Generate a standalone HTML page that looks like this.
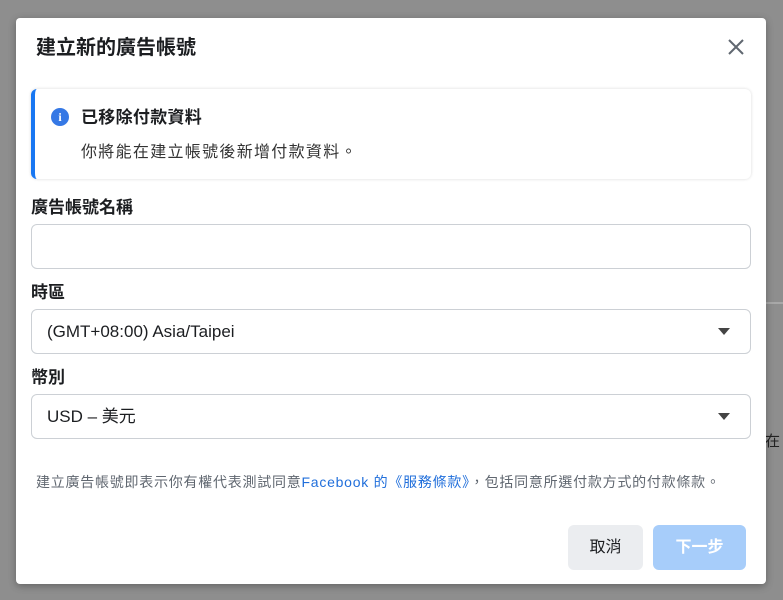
<!DOCTYPE html>
<html><head><meta charset="utf-8"><style>
*{box-sizing:border-box;margin:0;padding:0}
body{width:783px;height:600px;background:#8e8e8e;position:relative;overflow:hidden;font-family:"Liberation Sans","Noto Sans CJK TC",sans-serif;color:#1c1e21}
.line{position:absolute;left:766px;top:302px;width:17px;height:2px;background:#a8a8a8}
.side{position:absolute;left:765px;top:430px;font-size:15px;color:#222}
.modal{position:absolute;left:16px;top:18px;width:750px;height:566px;background:#fff;border-radius:4px;box-shadow:0 2px 8px rgba(0,0,0,.3)}
.title{position:absolute;left:20px;top:17px;font-size:20px;line-height:26px;font-weight:bold}
.close{position:absolute;left:710px;top:19px}
.note{position:absolute;left:15px;top:71px;width:720px;height:90px;border-radius:6px;border-left:4px solid #1877f2;box-shadow:0 0 3px rgba(0,0,0,.15)}
.note .ic{position:absolute;left:16px;top:19px;width:18px;height:18px;border-radius:50%;background:#3578e5;color:#fff;font-size:12px;font-weight:bold;text-align:center;line-height:18px;font-family:"Liberation Serif",serif}
.note .h{position:absolute;left:46px;top:18px;font-size:17px;line-height:22px;font-weight:bold;letter-spacing:0.3px}
.note .b{position:absolute;left:46px;top:53px;font-size:16px;line-height:22px;color:#333;letter-spacing:1.3px}
.lbl{position:absolute;left:15px;font-size:17px;line-height:22px;font-weight:bold}
.in{position:absolute;left:15px;width:720px;height:45px;border:1px solid #ccd0d5;border-radius:6px;font-size:17px;line-height:22px;padding:11px 15px;color:#1c1e21}
.arr{position:absolute;right:20px;top:18px;width:0;height:0;border-left:6px solid transparent;border-right:6px solid transparent;border-top:7px solid #444}
.terms{position:absolute;left:20px;top:455px;font-size:14px;line-height:18px;color:#606770;letter-spacing:0.75px;white-space:nowrap}
.terms a{color:#216fdb;text-decoration:none}
.btn{position:absolute;top:507px;height:45px;border-radius:6px;font-size:16px;font-weight:bold;text-align:center;line-height:45px}
</style></head><body>
<div class="line"></div><div class="side">在</div>
<div class="modal">
<div class="title">建立新的廣告帳號</div>
<svg class="close" width="20" height="20" viewBox="0 0 20 20"><path d="M3 3L17 17M17 3L3 17" stroke="#606770" stroke-width="2"/></svg>
<div class="note"><div class="ic">i</div><div class="h">已移除付款資料</div><div class="b">你將能在建立帳號後新增付款資料。</div></div>
<div class="lbl" style="top:179px">廣告帳號名稱</div>
<div class="in" style="top:206px"></div>
<div class="lbl" style="top:264px">時區</div>
<div class="in" style="top:291px">(GMT+08:00) Asia/Taipei<div class="arr"></div></div>
<div class="lbl" style="top:349px">幣別</div>
<div class="in" style="top:376px">USD – 美元<div class="arr"></div></div>
<div class="terms">建立廣告帳號即表示你有權代表測試同意<a>Facebook 的《服務條款》</a>，包括同意所選付款方式的付款條款。</div>
<div class="btn" style="left:552px;width:75px;background:#ebedf0;color:#1c1e21;font-weight:normal">取消</div>
<div class="btn" style="left:637px;width:93px;background:#a7cdfa;color:#fff">下一步</div>
</div>
</body></html>
